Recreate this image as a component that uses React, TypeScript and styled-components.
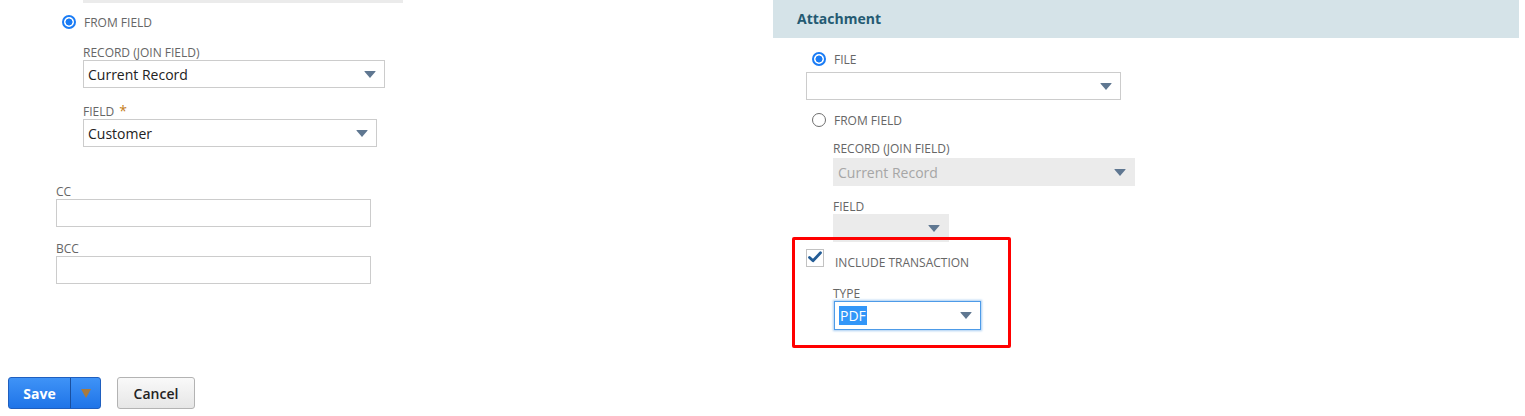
import styled, { createGlobalStyle } from "styled-components";

const GlobalStyle = createGlobalStyle`
  body {
    margin: 0;
    background: #ffffff;
    font-family: "Open Sans", "Liberation Sans", sans-serif;
  }
`;

const App = () => {
  return (
    <>
      <GlobalStyle />
      <Page>
        <Columns>
          <LeftColumn>
            <TopBar />
            <SubGroup>
              <RadioRow $top={10}>
                <Radio checked />
                <RadioText>From Field</RadioText>
              </RadioRow>
              <Label $top={12}>Record (Join Field)</Label>
              <Select $width={302}>
                <SelectValue>Current Record</SelectValue>
                <Arrow />
              </Select>
              <Label $top={13}>
                Field <Required>*</Required>
              </Label>
              <Select $width={294}>
                <SelectValue>Customer</SelectValue>
                <Arrow />
              </Select>
            </SubGroup>
            <Label $top={35}>CC</Label>
            <TextInput />
            <Label $top={12}>BCC</Label>
            <TextInput />
          </LeftColumn>

          <RightColumn>
            <SectionHeader>Attachment</SectionHeader>
            <SectionBody>
              <RadioRow $top={12} $indent={6}>
                <Radio checked />
                <RadioText>File</RadioText>
              </RadioRow>
              <Select $width={315} $top={4}>
                <SelectValue />
                <Arrow />
              </Select>
              <RadioRow $top={11} $indent={6}>
                <Radio />
                <RadioText>From Field</RadioText>
              </RadioRow>
              <Indented>
                <Label $top={10}>Record (Join Field)</Label>
                <Select $width={302} $top={2} $disabled>
                  <SelectValue $disabled>Current Record</SelectValue>
                  <Arrow />
                </Select>
                <Label $top={11}>Field</Label>
                <Select $width={116} $disabled>
                  <SelectValue />
                  <Arrow />
                </Select>
              </Indented>
              <Highlight>
                <CheckRow>
                  <Checkbox>
                    <svg width="14" height="12" viewBox="0 0 14 12">
                      <path
                        d="M1.5 6.5 L5 9.8 L12.5 1.8"
                        fill="none"
                        stroke="#245d96"
                        strokeWidth="2.8"
                        strokeLinecap="round"
                        strokeLinejoin="round"
                      />
                    </svg>
                  </Checkbox>
                  <CheckText>Include Transaction</CheckText>
                </CheckRow>
                <TypeGroup>
                  <Label $top={0}>Type</Label>
                  <FocusSelect>
                    <Selected>PDF</Selected>
                    <Arrow />
                  </FocusSelect>
                </TypeGroup>
              </Highlight>
            </SectionBody>
          </RightColumn>
        </Columns>

        <Footer>
          <SplitButton>
            <SplitMain>Save</SplitMain>
            <SplitToggle>
              <ToggleArrow />
            </SplitToggle>
          </SplitButton>
          <CancelButton>Cancel</CancelButton>
        </Footer>
      </Page>
    </>
  );
};

const Page = styled.div`
  width: 1525px;
  height: 416px;
  overflow: hidden;
`;

const Columns = styled.div`
  display: flex;
  align-items: flex-start;
`;

const LeftColumn = styled.div`
  width: 773px;
  padding-left: 56px;
  box-sizing: border-box;
  display: flex;
  flex-direction: column;
  align-items: flex-start;
`;

const TopBar = styled.div`
  width: 320px;
  height: 3px;
  margin-left: 27px;
  background: #ebebeb;
`;

const SubGroup = styled.div`
  display: flex;
  flex-direction: column;
  align-items: flex-start;
  margin-left: 27px;
`;

const RadioRow = styled.div<{ $top?: number; $indent?: number }>`
  display: flex;
  align-items: center;
  gap: 8px;
  height: 18px;
  margin-top: ${({ $top }) => $top ?? 9}px;
  margin-left: ${({ $indent }) => $indent ?? -21}px;
`;

const Radio = styled.span<{ checked?: boolean }>`
  width: 14px;
  height: 14px;
  border-radius: 50%;
  box-sizing: border-box;
  border: ${({ checked }) => (checked ? "2px solid #1a7cf5" : "1px solid #6e6e6e")};
  background: ${({ checked }) =>
    checked ? "radial-gradient(circle, #1a7cf5 0 3.2px, #ffffff 3.8px)" : "#ffffff"};
`;

const RadioText = styled.span`
  font-size: 12px;
  color: #666666;
  text-transform: uppercase;
  line-height: 16px;
  padding-top: 2px;
`;

const Label = styled.div<{ $top: number }>`
  font-size: 12px;
  line-height: 14px;
  padding-top: 3px;
  color: #666666;
  text-transform: uppercase;
  margin-top: ${({ $top }) => $top}px;
`;

const Required = styled.span`
  color: #c47c1a;
  font-size: 14px;
  margin-left: 2px;
`;

const Select = styled.div<{ $width: number; $top?: number; $disabled?: boolean }>`
  width: ${({ $width }) => $width}px;
  height: 28px;
  margin-top: ${({ $top }) => $top ?? 0}px;
  box-sizing: border-box;
  border: 1px solid ${({ $disabled }) => ($disabled ? "#ebebeb" : "#cccccc")};
  background: ${({ $disabled }) => ($disabled ? "#ebebeb" : "#ffffff")};
  display: flex;
  align-items: center;
  justify-content: space-between;
  padding: 0 8px 0 4px;
`;

const SelectValue = styled.span<{ $disabled?: boolean }>`
  font-size: 14px;
  color: ${({ $disabled }) => ($disabled ? "#a6a6a6" : "#222222")};
`;

const Arrow = styled.span`
  width: 0;
  height: 0;
  border-left: 6.5px solid transparent;
  border-right: 6.5px solid transparent;
  border-top: 7px solid #5f7791;
  border-radius: 1px;
`;

const TextInput = styled.div`
  width: 315px;
  height: 28px;
  box-sizing: border-box;
  border: 1px solid #cccccc;
  background: #ffffff;
`;

const RightColumn = styled.div`
  width: 746px;
`;

const SectionHeader = styled.div`
  height: 38px;
  line-height: 37px;
  padding-left: 24px;
  background: #d5e3e8;
  color: #245a72;
  font-size: 14px;
  font-weight: 700;
`;

const SectionBody = styled.div`
  padding-left: 33px;
  display: flex;
  flex-direction: column;
  align-items: flex-start;
`;

const Indented = styled.div`
  margin-left: 27px;
  display: flex;
  flex-direction: column;
  align-items: flex-start;
`;

const Highlight = styled.div`
  width: 219px;
  height: 111px;
  margin-top: -5px;
  margin-left: -14px;
  box-sizing: border-box;
  border: 3px solid #ff0000;
  border-radius: 2px;
  padding: 9px 0 0 11px;
`;

const CheckRow = styled.div`
  display: flex;
  align-items: flex-start;
  gap: 11px;
`;

const Checkbox = styled.span`
  width: 18px;
  height: 18px;
  box-sizing: border-box;
  border: 1px solid #c2c2c2;
  background: #ffffff;
  display: flex;
  align-items: center;
  justify-content: center;
  padding-bottom: 2px;
`;

const CheckText = styled.span`
  font-size: 12px;
  line-height: 16px;
  color: #666666;
  text-transform: uppercase;
  margin-top: 6px;
`;

const TypeGroup = styled.div`
  margin-left: 27px;
  margin-top: 13px;
`;

const FocusSelect = styled.div`
  width: 147px;
  height: 29px;
  margin-left: 1px;
  box-sizing: border-box;
  border: 1px solid #4d9be8;
  box-shadow: 0 0 2px 1px #a9cdf2;
  background: #ffffff;
  display: flex;
  align-items: center;
  justify-content: space-between;
  padding: 0 8px 0 4px;
`;

const Selected = styled.span`
  font-size: 14px;
  line-height: 19px;
  color: #ffffff;
  background: #3296f8;
  padding: 0 1px;
`;

const Footer = styled.div`
  display: flex;
  gap: 16px;
  margin-top: 29px;
  padding-left: 8px;
`;

const SplitButton = styled.div`
  display: flex;
  height: 32px;
  box-sizing: border-box;
  border: 1px solid #1f5fbf;
  border-radius: 3px;
  background: linear-gradient(#3f93f7, #1f74e8);
  overflow: hidden;
`;

const SplitMain = styled.span`
  width: 61px;
  display: flex;
  align-items: center;
  justify-content: center;
  color: #ffffff;
  font-size: 14px;
  font-weight: 700;
  border-right: 1px solid #1a4f9e;
`;

const SplitToggle = styled.span`
  width: 29px;
  display: flex;
  align-items: center;
  justify-content: center;
`;

const ToggleArrow = styled.span`
  width: 0;
  height: 0;
  border-left: 5px solid transparent;
  border-right: 5px solid transparent;
  border-top: 9px solid #a87a3e;
`;

const CancelButton = styled.span`
  width: 78px;
  height: 32px;
  box-sizing: border-box;
  border: 1px solid #b3b3b3;
  border-radius: 3px;
  background: linear-gradient(#f9f9f9, #e6e6e6);
  display: flex;
  align-items: center;
  justify-content: center;
  font-size: 14px;
  font-weight: 600;
  color: #222222;
`;

export default App;
